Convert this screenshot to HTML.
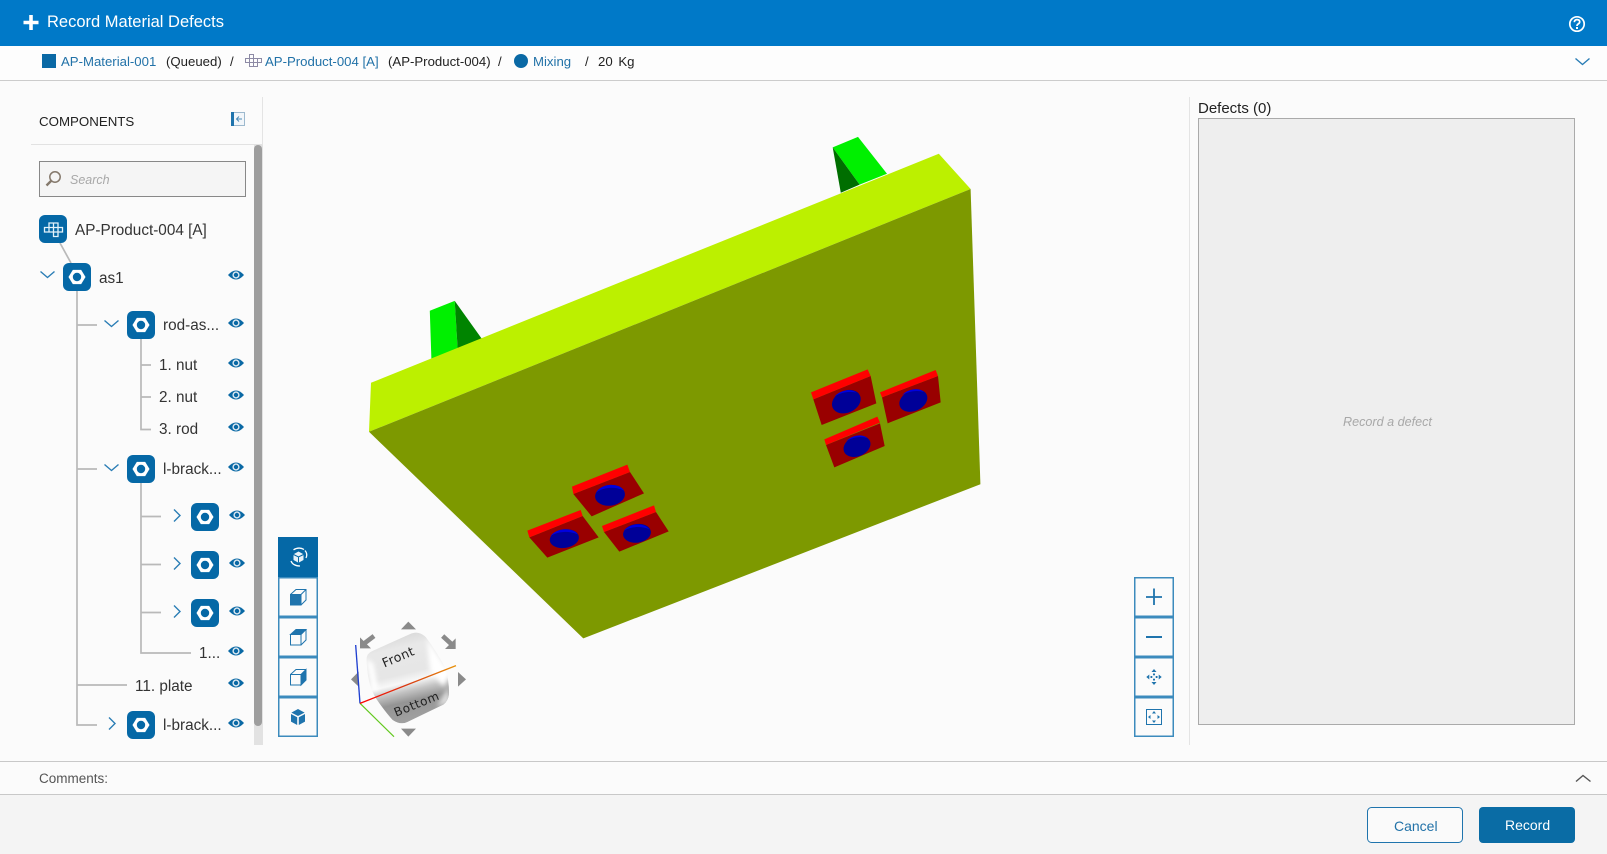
<!DOCTYPE html>
<html><head><meta charset="utf-8"><title>Record Material Defects</title>
<style>
html,body{margin:0;padding:0;width:1607px;height:854px;overflow:hidden;background:#fbfbfb}
body{position:relative;font-family:"Liberation Sans",sans-serif;color:#333}
svg.bg{position:absolute;left:0;top:0}
.t{position:absolute;white-space:nowrap;line-height:20px;font-size:15.300px}
.b{font-size:13.200px;color:#222}
.l{color:#2272a8}
</style></head><body>
<svg class="bg" width="1607" height="854" viewBox="0 0 1607 854" xmlns="http://www.w3.org/2000/svg">
<defs>
<symbol id="eye" viewBox="0 0 16 12" overflow="visible"><path d="M0 6Q8 -3 16 6Q8 15 0 6Z" fill="#0a69a5"/><circle cx="8" cy="6" r="3.600" fill="#dfeaf2"/><circle cx="8" cy="6" r="2.200" fill="#0a69a5"/></symbol>
<symbol id="node" viewBox="0 0 28 28"><rect width="28" height="28" rx="6" fill="#0568a6"/><path d="M5.800 14L10 7.200H18L22.200 14L18 20.800H10Z" fill="#fff" stroke="#fff" stroke-width=".6" stroke-linejoin="round"/><circle cx="14" cy="14" r="4.200" fill="#0568a6"/></symbol>
<symbol id="cd" viewBox="0 0 16 8" overflow="visible"><path d="M.5 .5L7.500 6.500L14.500 .5" fill="none" stroke="#2a7db5" stroke-width="1.400"/></symbol>
<symbol id="cr" viewBox="0 0 8 14" overflow="visible"><path d="M1 .5L7 6.500L1 12.500" fill="none" stroke="#2a7db5" stroke-width="1.400"/></symbol>
<linearGradient id="cg" gradientUnits="userSpaceOnUse" x1="395" y1="320" x2="455" y2="575">
<stop offset="0" stop-color="#dcdcdc"/><stop offset=".12" stop-color="#e8e8e8"/><stop offset=".42" stop-color="#e6e6e6"/><stop offset=".52" stop-color="#f8f8f8"/><stop offset=".62" stop-color="#c4c4c4"/><stop offset=".74" stop-color="#949494"/><stop offset="1" stop-color="#a2a2a2"/>
</linearGradient>
<linearGradient id="rg" gradientUnits="userSpaceOnUse" x1="270" y1="520" x2="558" y2="407"><stop offset="0" stop-color="#f00"/><stop offset=".5" stop-color="#d93a10"/><stop offset="1" stop-color="#e8920a"/></linearGradient>
<filter id="bl" x="-50%" y="-50%" width="200%" height="200%"><feGaussianBlur stdDeviation="7"/></filter>
<clipPath id="cc"><path d="M290 390Q288 372 305 364L425 310Q448 302 468 322Q500 365 526 415Q538 455 537 492Q535 512 520 524L412 576Q392 586 368 570Q345 545 318 505Q292 465 290 390Z"/></clipPath>
</defs>

<!-- page structure -->
<rect x="0" y="0" width="1607" height="46" fill="#0079c8"/>
<rect x="0" y="46" width="1607" height="34" fill="#fdfdfd"/>
<rect x="0" y="80" width="1607" height="1" fill="#cccccc"/>
<rect x="262" y="97" width="1" height="648" fill="#e4e4e4"/>
<rect x="1189" y="97" width="1" height="648" fill="#e4e4e4"/>
<rect x="31" y="144" width="231" height="1" fill="#e2e2e2"/>
<rect x="0" y="761" width="1607" height="1" fill="#c8c8c8"/>
<rect x="0" y="794" width="1607" height="1" fill="#c8c8c8"/>
<rect x="0" y="795" width="1607" height="59" fill="#f4f4f4"/>

<!-- header icons -->
<path d="M31 15V30M23.500 22.500H38.500" stroke="#fff" stroke-width="3.600"/>
<circle cx="1577" cy="24" r="7.200" fill="none" stroke="#fff" stroke-width="1.700"/>
<path d="M1574.300 22.200Q1574.500 19.600 1577 19.600Q1579.700 19.600 1579.700 21.800Q1579.700 23.200 1578.200 24Q1577 24.700 1577 26" fill="none" stroke="#fff" stroke-width="1.700"/>
<rect x="1576" y="27" width="2" height="2" fill="#fff"/>

<!-- breadcrumb icons -->
<rect x="42" y="54" width="14" height="14" fill="#0a69a5"/>
<g fill="none" stroke="#8d8aa5" stroke-width="1"><path d="M245.500 58.500H261.500V62.500H245.500ZM249.500 54.500H253.500V66.500H249.500ZM253.500 58.500H257.500V66.500H253.500V62.500"/></g>
<circle cx="521" cy="61" r="7" fill="#0a69a5"/>
<use href="#cd" x="1575" y="58" width="16" height="8"/>

<!-- collapse icon -->
<rect x="231.500" y="112.500" width="13" height="13" fill="#f2f6fa" stroke="#9db9ce"/>
<rect x="231" y="112" width="3" height="14" fill="#1f74ad"/>
<path d="M242 119H236.500M239 116.500L236.500 119L239 121.500" fill="none" stroke="#4c8cb8"/>

<!-- scrollbar -->
<rect x="254" y="145" width="9" height="600" fill="#e2e2e2"/>
<rect x="254" y="145" width="8" height="581" rx="4" fill="#9e9e9e"/>

<!-- search -->
<rect x="39.500" y="161.500" width="206" height="35" fill="#f5f5f5" stroke="#888"/>
<circle cx="55" cy="177" r="5.200" fill="none" stroke="#85796c" stroke-width="1.500"/>
<path d="M51 181L46.500 185.500" stroke="#85796c" stroke-width="2.400"/>

<!-- tree lines -->
<g stroke="#b9b9b9" stroke-width="1.700" fill="none">
<path d="M60 243L71 263"/>
<path d="M77 291V725H97M77 325H97M77 469H97M77 685H127"/>
<path d="M141 339V429.500H151M141 365H151M141 397H151"/>
<path d="M141 483V653H191M141 516.500H161M141 564.500H161M141 612.500H161"/>
</g>

<!-- root icon -->
<rect x="39" y="215" width="28" height="28" rx="6" fill="#0568a6"/>
<g fill="none" stroke="#e4f2fa" stroke-width="1.300"><path d="M44.500 227.500H62.500V232H44.500ZM49 223H58V227.500H49ZM53.500 223V227.500M49 227.500V232M53.500 227.500V236.500H58V232M58 227.500V232"/></g>

<!-- tree nodes -->
<use href="#node" x="63" y="263" width="28" height="28"/>
<use href="#node" x="127" y="311" width="28" height="28"/>
<use href="#node" x="127" y="455" width="28" height="28"/>
<use href="#node" x="191" y="503" width="28" height="28"/>
<use href="#node" x="191" y="551" width="28" height="28"/>
<use href="#node" x="191" y="599" width="28" height="28"/>
<use href="#node" x="127" y="711" width="28" height="28"/>
<use href="#cd" x="40" y="271" width="16" height="8"/>
<use href="#cd" x="104" y="320" width="16" height="8"/>
<use href="#cd" x="104" y="464" width="16" height="8"/>
<use href="#cr" x="173" y="509" width="8" height="14"/>
<use href="#cr" x="173" y="557" width="8" height="14"/>
<use href="#cr" x="173" y="605" width="8" height="14"/>
<use href="#cr" x="108" y="717" width="8" height="14"/>

<!-- eyes -->
<use href="#eye" x="228" y="269" width="16" height="12"/>
<use href="#eye" x="228" y="317" width="16" height="12"/>
<use href="#eye" x="228" y="357" width="16" height="12"/>
<use href="#eye" x="228" y="389" width="16" height="12"/>
<use href="#eye" x="228" y="421" width="16" height="12"/>
<use href="#eye" x="228" y="461" width="16" height="12"/>
<use href="#eye" x="229" y="509" width="16" height="12"/>
<use href="#eye" x="229" y="557" width="16" height="12"/>
<use href="#eye" x="229" y="605" width="16" height="12"/>
<use href="#eye" x="228" y="645" width="16" height="12"/>
<use href="#eye" x="228" y="677" width="16" height="12"/>
<use href="#eye" x="228" y="717" width="16" height="12"/>

<!-- 3D model -->
<polygon points="429.800,310.700 454.700,300.900 457.600,348.300 431.400,359.100" fill="#00f000"/>
<polygon points="454.700,300.900 481.600,338.500 457.600,348.300" fill="#008400"/>
<polygon points="832.700,147.400 858,136.900 887,173.800 859.600,184.600" fill="#00f000"/>
<polygon points="832.700,147.400 859.600,184.600 840.800,192.700" fill="#006e00"/>
<polygon points="371,382.800 938.800,153.800 970.600,189 369,431.800" fill="#bcf000"/>
<polygon points="369,431.800 970.600,189 980.400,484.200 583.300,638.400" fill="#7d9900"/>

<g transform="translate(510 450) scale(.33333)">
<polygon points="190,132 360,66 402,130 245,199" fill="#990000"/><polygon points="186,110 352,44 360,66 190,132" fill="#ff0000"/>
<ellipse cx="300" cy="136" rx="45" ry="31" transform="rotate(-8 300 136)" fill="#000098"/><path d="M258 128A45 31 -8 0 1 342 122A60 40 0 0 0 258 128Z" fill="#0000e0"/>
<polygon points="58,262 218,198 266,262 112,323" fill="#990000"/><polygon points="52,242 212,180 218,198 58,262" fill="#ff0000"/>
<ellipse cx="163" cy="266" rx="44" ry="28" transform="rotate(-8 163 266)" fill="#000098"/><path d="M122 258A44 28 -8 0 1 203 253A60 36 0 0 0 122 258Z" fill="#0000e0"/>
<polygon points="282,246 438,186 476,244 328,305" fill="#990000"/><polygon points="276,228 432,166 438,186 282,246" fill="#ff0000"/>
<ellipse cx="381" cy="250" rx="42" ry="28" transform="rotate(-8 381 250)" fill="#000098"/><path d="M342 242A42 28 -8 0 1 418 238A58 36 0 0 0 342 242Z" fill="#0000e0"/>
</g>
<g transform="translate(800 360) scale(.33333)">
<polygon points="40,118 212,48 229,130 65,195" fill="#990000"/><polygon points="33,97 203,28 212,48 40,118" fill="#ff0000"/>
<ellipse cx="139" cy="125" rx="45" ry="33" transform="rotate(-24 139 125)" fill="#000098"/><path d="M103 110A45 33 -24 0 1 170 98A60 40 -10 0 0 103 110Z" fill="#0000e0"/>
<polygon points="246,112 414,48 422,127 263,190" fill="#990000"/><polygon points="240,97 407,30 414,48 246,112" fill="#ff0000"/>
<ellipse cx="340" cy="122" rx="44" ry="31" transform="rotate(-24 340 122)" fill="#000098"/><path d="M305 106A44 31 -24 0 1 372 96A60 40 -10 0 0 305 106Z" fill="#0000e0"/>
<polygon points="78,255 240,190 254,258 103,322" fill="#990000"/><polygon points="73,238 232,170 240,188 78,255" fill="#ff0000"/>
<ellipse cx="171" cy="259" rx="42" ry="30" transform="rotate(-22 171 259)" fill="#000098"/><path d="M138 244A42 30 -22 0 1 202 234A56 38 -10 0 0 138 244Z" fill="#0000e0"/>
</g>

<!-- left toolbar -->
<rect x="278" y="537" width="40" height="40" fill="#0568a6"/>
<g fill="#fbfbfb" stroke="#3c8bbd" stroke-width="1.500">
<rect x="278.750" y="577.750" width="38.500" height="38.500"/>
<rect x="278.750" y="617.750" width="38.500" height="38.500"/>
<rect x="278.750" y="657.750" width="38.500" height="38.500"/>
<rect x="278.750" y="697.750" width="38.500" height="38.500"/>
</g>
<!-- rotate icon -->
<g transform="translate(278 538)" fill="none" stroke="#fff">
<path d="M20.500 13.500L25.500 16.200V22L20.500 24.800L15.500 22V16.200Z" fill="#e8f2f8" stroke="none"/>
<path d="M15.500 16.500L20.500 19L25.500 16.500M20.500 19V24.500" stroke="#0568a6" stroke-width="1"/>
<path d="M15.500 11.800Q21 8.500 26 11.500M13 23Q15 28 22 28" stroke-width="1.300"/>
<path d="M27 12.500Q30 16 28 20" stroke-width="1.300"/>
</g>
<!-- cube view icons -->
<g transform="translate(278 577)" stroke="#1f74ad" stroke-width="1" fill="none"><rect x="12.500" y="17.500" width="10.500" height="10.500" fill="#1f74ad"/><path d="M12.500 17.500L18 12.500H28V23L23 28M23 17.500L28 12.500"/></g>
<g transform="translate(278 617)" stroke="#1f74ad" stroke-width="1" fill="none"><path d="M12.500 17.500L18 12.500H28L23 17.500Z" fill="#1f74ad"/><rect x="12.500" y="17.500" width="10.500" height="10.500"/><path d="M28 12.500V23L23 28"/></g>
<g transform="translate(278 657)" stroke="#1f74ad" stroke-width="1" fill="none"><path d="M23 17.500L28 12.500V23L23 28Z" fill="#1f74ad"/><rect x="12.500" y="17.500" width="10.500" height="10.500"/><path d="M12.500 17.500L18 12.500H28"/></g>
<g transform="translate(278 697)" fill="#1f74ad"><path d="M20 12L26.600 15.600L20 19L13.400 15.600Z"/><path d="M13 17L19.200 20.300V28L13 24.600Z"/><path d="M27 17L20.800 20.300V28L27 24.600Z"/></g>

<!-- nav cube -->
<g transform="translate(270 530) scale(.33333)">
<g clip-path="url(#cc)">
<rect x="280" y="300" width="270" height="290" fill="url(#cg)"/>
<path d="M470 325L540 430L520 470L480 420Z" fill="#fff" filter="url(#bl)"/>
<path d="M288 385L310 400L325 480L305 480Z" fill="#fff" filter="url(#bl)"/>
<path d="M535 470L540 520L500 530Z" fill="#ddd" filter="url(#bl)"/>
</g>
<g fill="#8a8a8a">
<polygon points="415,275 393,298 438,298"/><polygon points="393,596 438,596 415,620"/>
<polygon points="243,448 266,425 266,470"/><polygon points="588,448 564,426 564,470"/>
<polygon points="270,355 270,322 303,355"/><polygon points="557,357 557,325 525,357"/>
</g>
<path d="M283 340L312 318M544 342L518 318" stroke="#8a8a8a" stroke-width="14" fill="none"/>
<path d="M270 520L257 345" stroke="#1f3fd0" stroke-width="4" fill="none"/>
<path d="M270 520L372 620" stroke="#62c81e" stroke-width="3.500" fill="none"/>
<path d="M270 520L558 407" stroke="url(#rg)" stroke-width="4" fill="none"/>
<text x="385" y="394" text-anchor="middle" transform="rotate(-23 385 382)" font-family="DejaVu Sans,sans-serif" font-size="38" letter-spacing="1" fill="#222">Front</text>
<text x="442" y="534" text-anchor="middle" transform="rotate(-22 442 527)" font-family="DejaVu Sans,sans-serif" font-size="36" letter-spacing="2" fill="#222">Bottom</text>
</g>

<!-- right toolbar -->
<g fill="#fbfbfb" stroke="#3c8bbd" stroke-width="1.500">
<rect x="1134.750" y="577.750" width="38.500" height="38.500"/>
<rect x="1134.750" y="617.750" width="38.500" height="38.500"/>
<rect x="1134.750" y="657.750" width="38.500" height="38.500"/>
<rect x="1134.750" y="697.750" width="38.500" height="38.500"/>
</g>
<path d="M1154 588.500V605M1146 597H1162" stroke="#1f74ad" stroke-width="1.800" fill="none"/>
<path d="M1146 637H1162" stroke="#1f74ad" stroke-width="2" fill="none"/>
<g fill="#1f74ad">
<path d="M1154 669L1156.500 672H1151.500ZM1154 685L1156.500 682H1151.500ZM1146.300 677L1149.300 674.500V679.500ZM1161.700 677L1158.700 674.500V679.500Z"/>
<rect x="1153" y="673.500" width="2" height="1.800"/><rect x="1153" y="678.700" width="2" height="1.800"/><rect x="1150.500" y="676" width="1.800" height="2"/><rect x="1155.700" y="676" width="1.800" height="2"/>
<path d="M1154 711L1156 713.500H1152ZM1154 723L1156 720.500H1152ZM1148 717L1150.500 715V719ZM1160 717L1157.500 715V719Z"/>
</g>
<rect x="1146.500" y="709.500" width="15" height="15" fill="none" stroke="#1f74ad" stroke-width="1"/>

<!-- defects -->
<rect x="1198.500" y="118.500" width="376" height="606" fill="#eeeeee" stroke="#aaaaaa" stroke-width="1"/>

<!-- comments chevron -->
<path d="M1576 781.500L1583 775.500L1590.500 781.500" fill="none" stroke="#555" stroke-width="1.400"/>

<!-- buttons -->
<rect x="1367.500" y="807.500" width="95" height="35" rx="4" fill="#fafafa" stroke="#1f74ad"/>
<rect x="1479" y="807" width="96" height="36" rx="4" fill="#0a6ca5"/>
</svg>

<div class="t" style="left:47px;top:12px;font-size:16.500px;color:#fff">Record Material Defects</div>

<div class="t b l" style="left:61px;top:52px">AP-Material-001</div>
<div class="t b" style="left:166px;top:52px">(Queued)</div>
<div class="t b" style="left:230px;top:52px">/</div>
<div class="t b l" style="left:265px;top:52px">AP-Product-004 [A]</div>
<div class="t b" style="left:388px;top:52px">(AP-Product-004)</div>
<div class="t b" style="left:498px;top:52px">/</div>
<div class="t b l" style="left:533px;top:52px">Mixing</div>
<div class="t b" style="left:585px;top:52px">/</div>
<div class="t b" style="left:598px;top:52px;word-spacing:2px">20 Kg</div>

<div class="t" style="left:39px;top:112px;font-size:13.300px;color:#222">COMPONENTS</div>
<div class="t" style="left:70px;top:170px;font-size:12.500px;font-style:italic;color:#a8a8a8">Search</div>
<div class="t" style="left:75px;top:221px">AP-Product-004 [A]</div>
<div class="t" style="left:99px;top:269px">as1</div>
<div class="t" style="left:163px;top:316px">rod-as...</div>
<div class="t" style="left:159px;top:356px">1. nut</div>
<div class="t" style="left:159px;top:388px">2. nut</div>
<div class="t" style="left:159px;top:420px">3. rod</div>
<div class="t" style="left:163px;top:460px">l-brack...</div>
<div class="t" style="left:199px;top:644px">1...</div>
<div class="t" style="left:135px;top:677px">11. plate</div>
<div class="t" style="left:163px;top:716px">l-brack...</div>

<div class="t" style="left:1198px;top:99px;color:#222;font-size:15px">Defects (0)</div>
<div class="t" style="left:1343px;top:412px;font-size:12.600px;font-style:italic;color:#a8a8a8">Record a defect</div>
<div class="t" style="left:39px;top:769px;font-size:13.500px;color:#555">Comments:</div>
<div class="t" style="left:1394px;top:816px;font-size:14px;color:#2272a8">Cancel</div>
<div class="t" style="left:1505px;top:815px;font-size:14px;color:#fff">Record</div>
</body></html>
